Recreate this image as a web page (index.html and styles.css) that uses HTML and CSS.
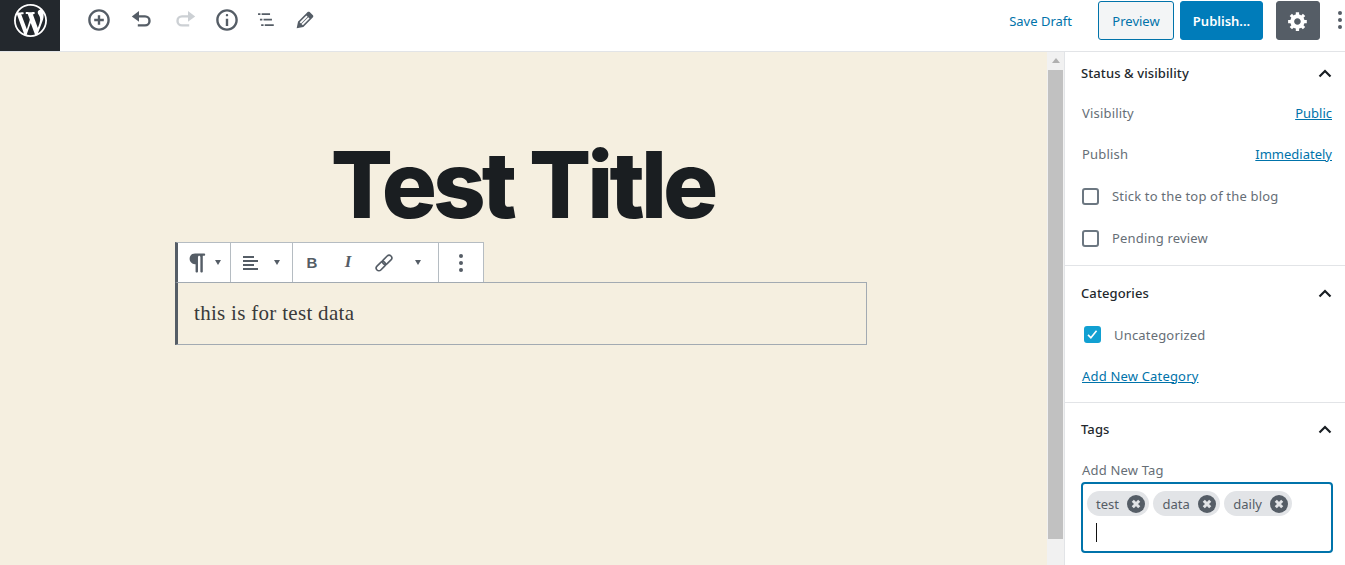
FILE: index.html
```html
<!DOCTYPE html>
<html lang="en">
<head>
  <meta charset="UTF-8">
  <meta name="viewport" content="width=device-width, initial-scale=1.0">
  <title>Edit Post</title>
  <link rel="stylesheet" href="styles.css">
</head>
<body>
  <header class="topbar">
    <a class="logo" href="#">
      <svg width="33" height="33" viewBox="0 0 20 20"><path fill="#fff" d="M20 10c0-5.51-4.49-10-10-10C4.48 0 0 4.49 0 10c0 5.52 4.48 10 10 10 5.51 0 10-4.48 10-10zM7.78 15.37L4.37 6.22c.55-.02 1.17-.08 1.17-.08.5-.06.44-1.13-.06-1.11 0 0-1.45.11-2.37.11-.18 0-.37 0-.58-.01C4.12 2.69 6.87 1.11 10 1.11c2.33 0 4.45.87 6.05 2.34-.68-.11-1.65.39-1.65 1.58 0 .74.45 1.36.9 2.1.35.61.55 1.36.55 2.46 0 1.49-1.4 5-1.4 5l-3.03-8.37c.54-.02.82-.17.82-.17.5-.05.44-1.25-.06-1.22 0 0-1.44.12-2.38.12-.87 0-2.33-.12-2.33-.12-.5-.03-.56 1.2-.06 1.22l.92.08 1.26 3.41zM17.41 10c.24-.64.74-1.87.43-4.25.7 1.29 1.05 2.71 1.05 4.25 0 3.29-1.73 6.24-4.4 7.78.97-2.59 1.94-5.2 2.92-7.78zM6.1 18.09C3.12 16.65 1.11 13.53 1.11 10c0-1.3.23-2.48.72-3.59C3.25 10.3 4.67 14.2 6.1 18.09zm4.03-6.63l2.58 6.98c-.86.29-1.76.45-2.71.45-.79 0-1.57-.11-2.29-.33.81-2.38 1.62-4.74 2.42-7.1z"/></svg>
    </a>
    <div class="tools">
      <svg class="tool" viewBox="0 0 20 20"><path d="M10 1c-5 0-9 4-9 9s4 9 9 9 9-4 9-9-4-9-9-9zm0 16c-3.9 0-7-3.1-7-7s3.1-7 7-7 7 3.1 7 7-3.1 7-7 7zm1-11H9v3H6v2h3v3h2v-3h3V9h-3V6z"/></svg>
      <svg class="tool" viewBox="0 0 20 20"><path class="line" d="M4 7h8.500a3.750 3.750 0 0 1 0 7.500H6.500"/><path d="M7.500 2.500v9L1.500 7z"/></svg>
      <svg class="tool off" viewBox="0 0 20 20"><path class="line" d="M16 7H7.500a3.750 3.750 0 0 0 0 7.500h6"/><path d="M12.500 2.500v9l6-4.500z"/></svg>
      <svg class="tool tool-info" viewBox="0 0 20 20"><path d="M9 15h2V9H9v6zm1-10c-.5 0-1 .5-1 1s.5 1 1 1 1-.5 1-1-.5-1-1-1zm0-4c-5 0-9 4-9 9s4 9 9 9 9-4 9-9-4-9-9-9zm0 16c-3.9 0-7-3.1-7-7s3.1-7 7-7 7 3.1 7 7-3.1 7-7 7z"/></svg>
      <svg class="tool tool-list" viewBox="0 0 20 20"><path d="M4.200 4.300h2v1.500h-2zM7.200 4.300h7v1.500h-7zM5.800 8.900h2v1.500h-2zM8.800 8.900h7v1.500h-7zM6.800 13.500h2v1.500h-2zM9.800 13.500h7.500v1.500H9.800z"/></svg>
      <svg class="tool tool-pencil" viewBox="0 0 20 20"><path d="M13.890 3.390l2.710 2.720c.46.46.42 1.240.03 1.640l-8.010 8.020-5.560 1.160 1.160-5.580s7.600-7.630 7.990-8.030c.39-.39 1.220-.39 1.680.07zm-2.730 2.790l-5.590 5.610 1.110 1.110 5.540-5.650zm-2.970 8.230l5.580-5.600-1.070-1.080-5.590 5.600z"/></svg>
    </div>
    <div class="actions">
      <a class="save-draft" href="#">Save Draft</a>
      <button class="btn btn-preview">Preview</button>
      <button class="btn btn-publish">Publish...</button>
      <button class="btn btn-gear">
        <svg width="22" height="22" viewBox="0 0 20 20"><path fill="#fff" d="M18 12h-2.180c-.17.7-.44 1.350-.81 1.930l1.540 1.540-2.100 2.100-1.540-1.540c-.58.36-1.230.63-1.910.79V19H8v-2.180c-.68-.16-1.330-.43-1.910-.79l-1.540 1.540-2.120-2.120 1.540-1.540c-.36-.58-.63-1.230-.79-1.910H1V9.030h2.170c.16-.7.44-1.350.8-1.940L2.430 5.550l2.100-2.100 1.540 1.540c.58-.37 1.240-.64 1.930-.81V2h3v2.180c.68.16 1.330.43 1.910.79l1.540-1.540 2.120 2.120-1.540 1.540c.36.59.64 1.240.8 1.940H18V12zm-8.500 1.500c1.660 0 3-1.340 3-3s-1.340-3-3-3-3 1.340-3 3 1.340 3 3 3z"/></svg>
      </button>
      <span class="dots"><i></i><i></i><i></i></span>
    </div>
  </header>

  <div class="workspace">
    <main class="canvas">
      <h1 class="post-title">Test Title</h1>
      <div class="block-wrap">
        <div class="block-toolbar">
          <div class="tb-group tb-para">
            <svg class="tb-icon para-icon" viewBox="0 0 20 20"><path d="M15 2H7.540c-.83 0-1.590.2-2.280.6-.7.41-1.250.96-1.650 1.650C3.200 4.940 3 5.700 3 6.520s.2 1.580.61 2.270c.4.69.95 1.240 1.650 1.640.69.41 1.450.61 2.280.61h.43V17c0 .27.1.51.29.71.2.19.44.29.71.29.28 0 .51-.1.71-.29.2-.2.3-.44.3-.71V5c0-.27.09-.51.29-.71.2-.19.44-.29.71-.29s.51.1.71.29c.19.2.29.44.29.71v12c0 .27.1.51.3.71.2.19.43.29.71.29.27 0 .51-.1.71-.29.19-.2.29-.44.29-.71V4H15c.27 0 .5-.1.7-.3.2-.19.3-.43.3-.7s-.1-.51-.3-.71C15.500 2.100 15.270 2 15 2z"/></svg>
            <span class="caret"></span>
          </div>
          <div class="tb-group tb-align">
            <svg class="tb-icon" viewBox="0 0 20 20"><path d="M2 3h11v2H2zM2 7h15v2H2zM2 11h11v2H2zM2 15h15v2H2z"/></svg>
            <span class="caret"></span>
          </div>
          <div class="tb-group tb-format">
            <span class="fmt fmt-b">B</span>
            <span class="fmt fmt-i">I</span>
            <svg class="tb-icon link-icon" viewBox="0 0 20 20"><g class="chain" transform="rotate(-45 10 10)"><rect x="-1" y="7" width="12" height="6" rx="3"/><rect x="9" y="7" width="12" height="6" rx="3"/></g></svg>
            <span class="caret"></span>
          </div>
          <div class="tb-group tb-more">
            <span class="dots"><i></i><i></i><i></i></span>
          </div>
        </div>
        <p class="block-text">this is for test data</p>
      </div>
    </main>

    <div class="scrollbar">
      <span class="scroll-up"></span>
      <span class="scroll-thumb"></span>
    </div>

    <aside class="sidebar">
      <section class="panel">
        <div class="panel-head">
          <h2>Status &amp; visibility</h2>
          <svg class="chevron" viewBox="0 0 14 9"><path d="M1.500 7.500L7 2l5.500 5.500"/></svg>
        </div>
        <div class="row row-first"><span>Visibility</span><a href="#">Public</a></div>
        <div class="row"><span>Publish</span><a href="#">Immediately</a></div>
        <label class="row row-check"><span class="box"></span><span>Stick to the top of the blog</span></label>
        <label class="row row-check"><span class="box"></span><span>Pending review</span></label>
      </section>

      <section class="panel panel-cats">
        <div class="panel-head">
          <h2>Categories</h2>
          <svg class="chevron" viewBox="0 0 14 9"><path d="M1.500 7.500L7 2l5.500 5.500"/></svg>
        </div>
        <label class="row row-cat">
          <span class="box box-on"><svg viewBox="0 0 16 16"><path d="M2.500 8.500l3.500 3.500 7-8.500"/></svg></span>
          <span>Uncategorized</span>
        </label>
        <div class="row"><a href="#">Add New Category</a></div>
      </section>

      <section class="panel panel-tags">
        <div class="panel-head">
          <h2>Tags</h2>
          <svg class="chevron" viewBox="0 0 14 9"><path d="M1.500 7.500L7 2l5.500 5.500"/></svg>
        </div>
        <div class="tag-label">Add New Tag</div>
        <div class="tag-input">
          <div class="tag-list">
            <span class="tag">test<svg class="tag-x" viewBox="0 0 18 18"><circle cx="9" cy="9" r="9"/><path d="M5.800 5.800l6.400 6.400M12.200 5.800l-6.400 6.400"/></svg></span>
            <span class="tag">data<svg class="tag-x" viewBox="0 0 18 18"><circle cx="9" cy="9" r="9"/><path d="M5.800 5.800l6.400 6.400M12.200 5.800l-6.400 6.400"/></svg></span>
            <span class="tag">daily<svg class="tag-x" viewBox="0 0 18 18"><circle cx="9" cy="9" r="9"/><path d="M5.800 5.800l6.400 6.400M12.200 5.800l-6.400 6.400"/></svg></span>
          </div>
          <span class="text-cursor"></span>
        </div>
      </section>
    </aside>
  </div>
</body>
</html>
```

FILE: styles.css
```css
* {
  margin: 0;
  padding: 0;
  box-sizing: border-box;
}

html, body {
  height: 565px;
  overflow: hidden;
}

body {
  font-family: "Noto Sans", sans-serif;
  font-size: 13px;
  color: #666e76;
  background: #fff;
}

a {
  color: #0073aa;
}

/* top bar */
.topbar {
  display: flex;
  align-items: flex-start;
  height: 52px;
  background: #fff;
  border-bottom: 1px solid #e2e4e7;
}

.logo {
  display: flex;
  justify-content: center;
  align-items: center;
  flex: none;
  width: 60px;
  height: 51px;
  background: #23282d;
  padding-bottom: 11px;
}

.tools {
  display: flex;
  align-items: center;
  gap: 19px;
  height: 40px;
  padding-left: 27px;
}

.tool {
  width: 24px;
  height: 24px;
  fill: #555d66;
}

.tool .line {
  fill: none;
  stroke: #555d66;
  stroke-width: 2;
}

.tool.off {
  fill: #ccd0d4;
}

.tool.off .line {
  stroke: #ccd0d4;
}

.tool-info {
  margin-left: -1px;
}

.tool-list {
  margin-left: -5px;
}

.tool-pencil {
  margin-left: -3px;
}

.actions {
  display: flex;
  align-items: flex-start;
  margin-left: auto;
  height: 40px;
}

.save-draft {
  margin: 12px 26px 0 0;
  text-decoration: none;
  color: #0073aa;
  font-size: 13px;
}

.btn {
  display: flex;
  justify-content: center;
  align-items: center;
  height: 39px;
  margin-top: 1px;
  border-radius: 3px;
  border: 1px solid;
  font-family: inherit;
  font-size: 13px;
}

.btn-preview {
  width: 76px;
  color: #0073aa;
  background: #f3f5f6;
  border-color: #0073aa;
}

.btn-publish {
  width: 83px;
  margin-left: 6px;
  color: #fff;
  font-weight: 600;
  background: #007cba;
  border-color: #007cba;
}

.btn-gear {
  width: 44px;
  margin-left: 13px;
  background: #555d66;
  border-color: #555d66;
}

.dots {
  display: flex;
  flex-direction: column;
  gap: 3px;
}

.dots i {
  display: block;
  width: 4px;
  height: 4px;
  border-radius: 50%;
  background: #555d66;
}

.actions .dots {
  margin: 11px 3px 0 18px;
}

/* main area */
.workspace {
  display: flex;
  height: 513px;
}

.canvas {
  flex: 1;
  min-width: 0;
  background: #f5efe0;
  padding-top: 81px;
}

.post-title {
  margin-bottom: 5px;
  padding-right: 2px;
  font-family: Inter, sans-serif;
  font-size: 92px;
  font-weight: 800;
  line-height: 104px;
  letter-spacing: -4px;
  text-align: center;
  color: #1a1e21;
}

.block-wrap {
  width: 692px;
  margin: 0 0 0 175px;
}

.block-toolbar {
  display: flex;
  width: 309px;
  height: 40px;
  background: #fff;
  border: 1px solid #b5bcc2;
  border-left: 3px solid #555d66;
  border-bottom: none;
}

.tb-group {
  display: flex;
  align-items: center;
  height: 39px;
  border-right: 1px solid #b5bcc2;
}

.tb-para {
  width: 53px;
  padding-left: 8px;
  gap: 5px;
}

.tb-align {
  width: 62px;
  padding-left: 10px;
  gap: 13px;
}

.tb-format {
  width: 146px;
  padding-left: 13px;
}

.tb-more {
  flex: 1;
  justify-content: center;
  border-right: none;
}

.tb-icon {
  width: 20px;
  height: 20px;
  fill: #555d66;
}

.para-icon {
  width: 24px;
  height: 24px;
}

.fmt {
  width: 12px;
  padding-bottom: 1px;
  font-size: 15px;
  color: #555d66;
  text-align: center;
}

.fmt-b {
  font-family: "Liberation Sans", sans-serif;
  font-weight: 700;
}

.fmt-i {
  margin-left: 24px;
  font-family: "Liberation Serif", serif;
  font-style: italic;
  font-weight: 700;
  font-size: 17px;
}

.link-icon {
  width: 18px;
  height: 18px;
  margin-left: 21px;
}

.chain {
  fill: none;
  stroke: #555d66;
  stroke-width: 1.800;
}

.caret {
  width: 0;
  height: 0;
  border-left: 3.500px solid transparent;
  border-right: 3.500px solid transparent;
  border-top: 5px solid #555d66;
}

.tb-format .caret {
  margin-left: 22px;
}

.block-text {
  height: 63px;
  padding: 15px 0 0 16px;
  font-family: "Liberation Serif", serif;
  font-size: 21px;
  line-height: 30px;
  letter-spacing: .3px;
  color: #3a3a3a;
  border: 1px solid #a2aab2;
  border-left: 3px solid #555d66;
}

/* scrollbar */
.scrollbar {
  display: flex;
  flex-direction: column;
  align-items: center;
  flex: none;
  width: 17px;
  background: #f1f1f1;
}

.scroll-up {
  margin-top: 6px;
  width: 0;
  height: 0;
  border-left: 4px solid transparent;
  border-right: 4px solid transparent;
  border-bottom: 5px solid #b0b0b0;
}

.scroll-thumb {
  width: 15px;
  height: 469px;
  margin-top: 7px;
  background: #c1c1c1;
}

/* sidebar */
.sidebar {
  flex: none;
  width: 281px;
  background: #fff;
  border-left: 1px solid #e2e4e7;
}

.panel {
  height: 214px;
  padding: 0 12px 0 16px;
  border-bottom: 1px solid #e2e4e7;
}

.panel-cats {
  height: 137px;
  padding-top: 6px;
}

.panel-tags {
  height: 162px;
  padding-top: 5px;
  border-bottom: none;
}

.panel-head {
  display: flex;
  justify-content: space-between;
  align-items: center;
  height: 42px;
  padding-right: 1px;
}

.panel-head h2 {
  font-size: 13px;
  font-weight: 500;
  letter-spacing: .1px;
  color: #23282d;
}

.chevron {
  width: 14px;
  height: 9px;
  fill: none;
  stroke: #191e23;
  stroke-width: 2.200;
}

.row {
  display: flex;
  justify-content: space-between;
  align-items: center;
  height: 41px;
  padding: 0 1px;
  letter-spacing: .18px;
}

.row-first {
  margin-top: -2px;
}

.row a {
  letter-spacing: 0;
}

.row-check {
  justify-content: flex-start;
  gap: 13px;
  height: 42px;
}

.row-first + .row + .row-check {
  margin-top: 1px;
}

.row-cat {
  justify-content: flex-start;
  gap: 13px;
  padding-left: 3px;
}

.panel-cats .row a {
  letter-spacing: .18px;
}

.box {
  display: block;
  flex: none;
  width: 17px;
  height: 17px;
  border: 2px solid #6c7781;
  border-radius: 3px;
}

.box-on {
  background: #11a0d2;
  border-color: #11a0d2;
}

.box-on svg {
  display: block;
  width: 13px;
  height: 13px;
  fill: none;
  stroke: #fff;
  stroke-width: 2;
}

.tag-label {
  margin-top: 11px;
  padding-left: 1px;
  height: 18px;
  line-height: 18px;
  letter-spacing: .18px;
}

.tag-input {
  width: 252px;
  height: 71px;
  margin-top: 3px;
  padding: 7px 4px;
  border: 2px solid #0073aa;
  border-radius: 4px;
}

.tag-list {
  display: flex;
  gap: 4.500px;
}

.tag {
  display: flex;
  align-items: center;
  justify-content: space-between;
  height: 25px;
  padding: 0 4px 0 9px;
  gap: 8px;
  background: #e2e4e7;
  border-radius: 13px;
  font-size: 13px;
  color: #555d66;
}

.tag-x {
  width: 18px;
  height: 18px;
}

.tag-x circle {
  fill: #555d66;
}

.tag-x path {
  stroke: #e2e4e7;
  stroke-width: 3;
}

.text-cursor {
  display: block;
  width: 1px;
  height: 19px;
  margin: 7px 0 0 9px;
  background: #111;
}
```
